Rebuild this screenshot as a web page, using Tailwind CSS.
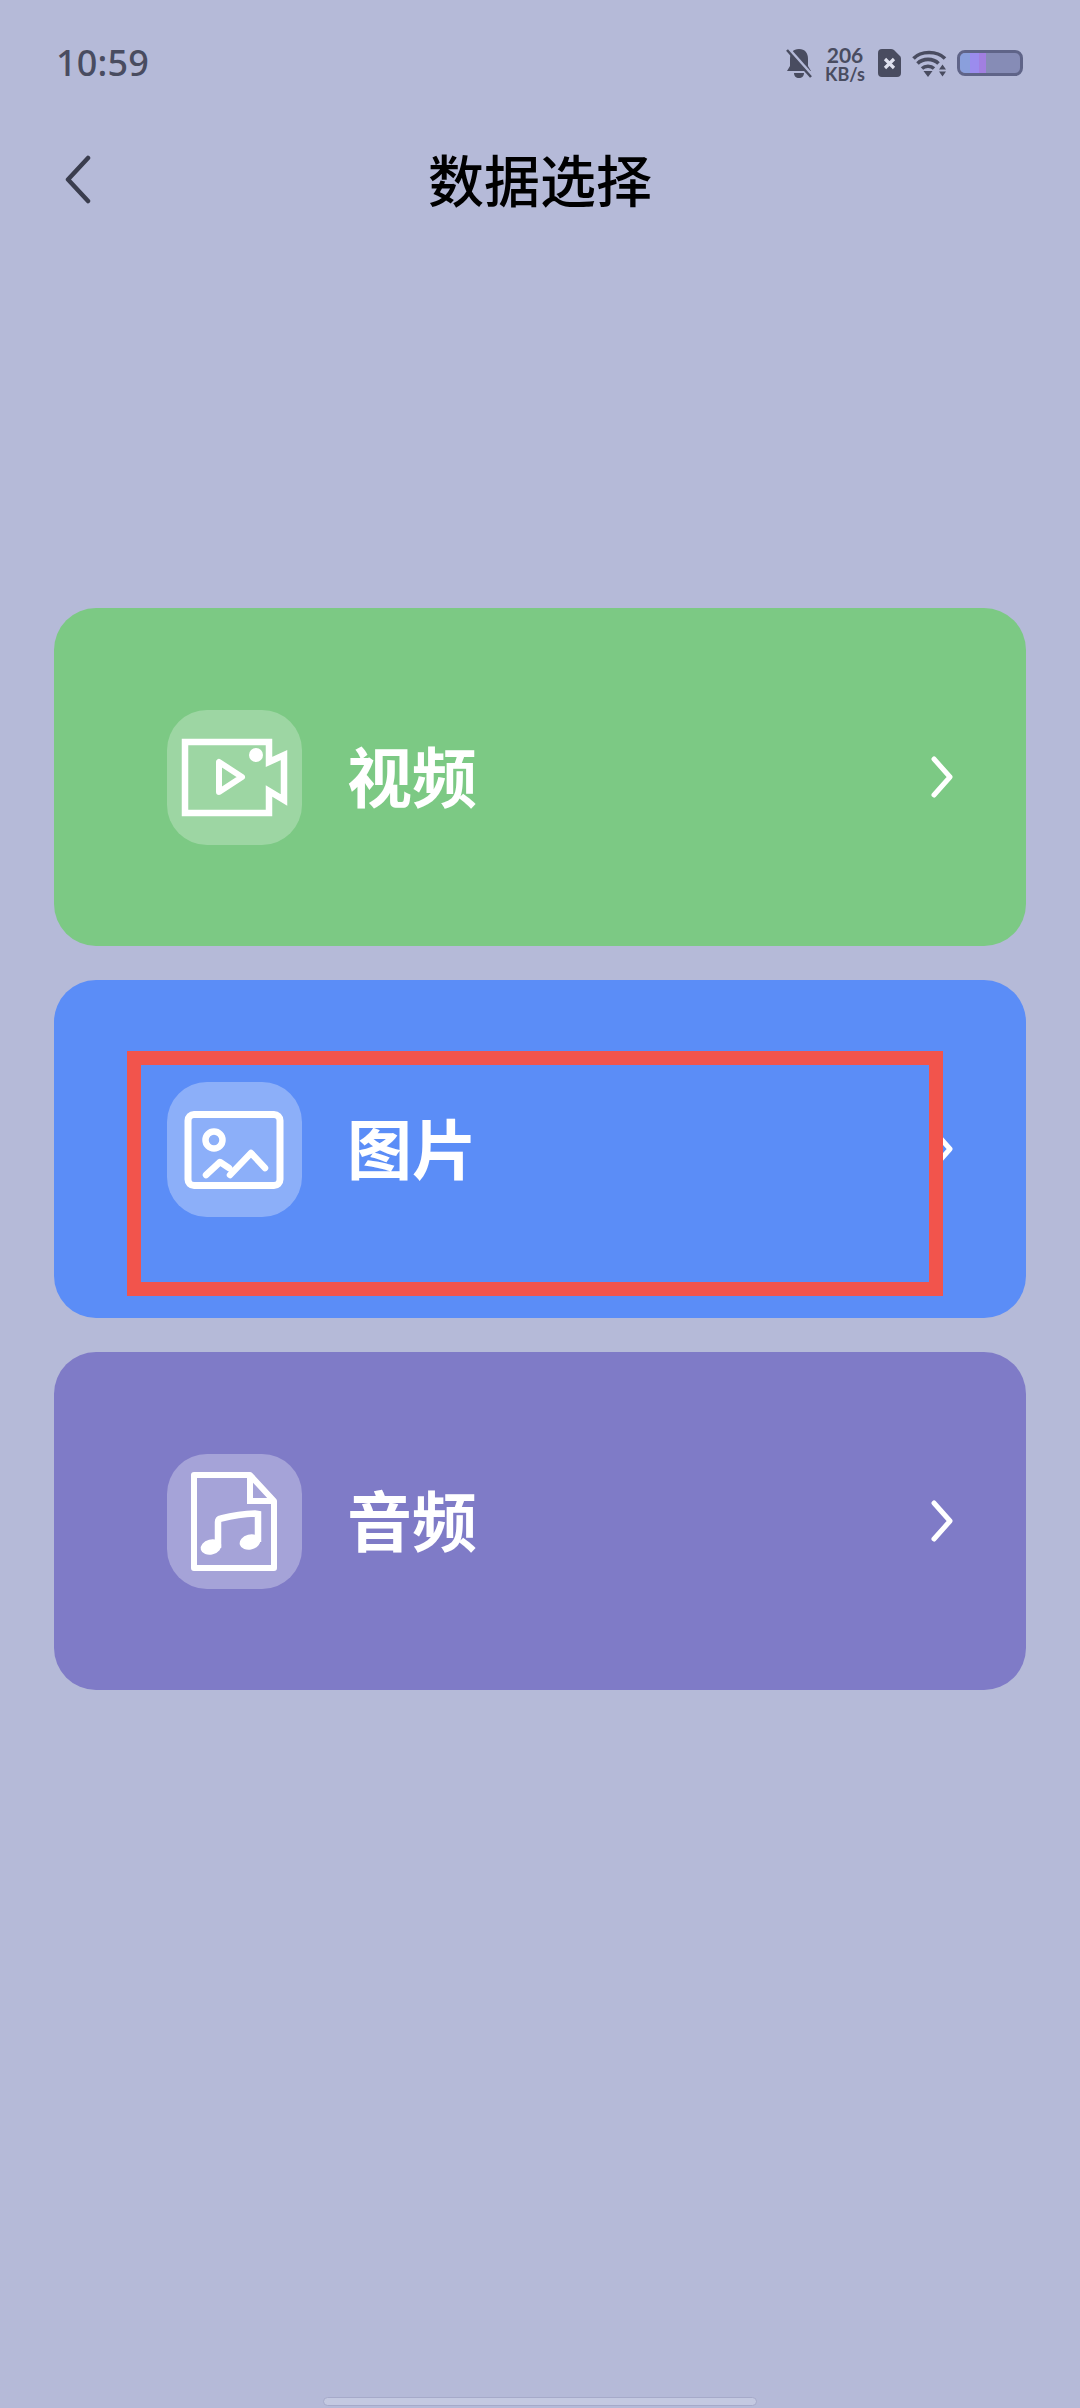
<!doctype html>
<html lang="zh">
<head>
<meta charset="utf-8">
<script src="https://cdn.jsdelivr.net/npm/@tailwindcss/browser@4"></script>
<title>数据选择</title>
</head>
<body class="m-0">
<div class="relative w-[1080px] h-[2408px] overflow-hidden bg-[#b5bad8] flex flex-col font-['Noto_Sans','Noto_Sans_CJK_SC',sans-serif]">
  <!-- status bar -->
  <div class="h-[128px] pt-[32px] pb-[34px] pl-[56px] pr-[57px] flex items-center justify-between text-[#494c60]">
    <span class="text-[36px] leading-none font-medium tracking-[0.2px]">10:59</span>
    <div class="flex items-center">
      <svg class="w-[26px] h-[30px]" viewBox="0 0 26 30">
        <path d="M13 1c6 0 9 4 9 10v7l3 5H1l3-5v-7c0-6 3-10 9-10zM8 25h10c0 3-2 5-5 5s-5-2-5-5z" fill="#494c60"/>
        <path d="M2 0 26 27" stroke="#b5bad8" stroke-width="3"/>
        <path d="M1 2 25 29" stroke="#494c60" stroke-width="2.500"/>
      </svg>
      <div class="ml-[13px] w-[40px] flex flex-col items-center font-bold font-['Lato',sans-serif]">
        <span class="text-[21px] leading-[21px]">206</span>
        <span class="text-[18px] leading-[18px]">KB/s</span>
      </div>
      <svg class="ml-[13px] w-[23px] h-[28px]" viewBox="0 0 23 28">
        <path d="M4 0h9c1 0 2 .5 3 1l6 6c.7.7 1 1.500 1 3v14a4 4 0 0 1-4 4H4a4 4 0 0 1-4-4V4a4 4 0 0 1 4-4z" fill="#494c60"/>
        <path d="M7 10 16 19M16 10 7 19" stroke="#dfe1ee" stroke-width="3.200"/>
      </svg>
      <svg class="ml-[11px] w-[35px] h-[27px]" viewBox="0 0 35 27">
        <path d="M1.500 8.500C9 .5 25 .5 33 8.500" fill="none" stroke="#494c60" stroke-width="3.600"/>
        <path d="M5.500 13.500C11 8 21 8 26.500 13.500" fill="none" stroke="#494c60" stroke-width="3.600"/>
        <path d="M10 18.500C13 15.500 19 15.500 22 18.500" fill="none" stroke="#494c60" stroke-width="3.400"/>
        <path d="M11.500 21h9l-4.500 6zM27 19.500l3.500-5 3.500 5zM27 21.500h7l-3.500 5z" fill="#494c60"/>
      </svg>
      <div class="ml-[10px] w-[66px] h-[26px] rounded-[8px] border-[3px] border-[#5f6488] bg-[#868cb6] overflow-hidden flex">
        <div class="w-[10px] bg-[#8a9fdc]"></div>
        <div class="w-[9px] bg-[#9b8cee]"></div>
        <div class="w-[7px] bg-[#a17fe0]"></div>
      </div>
    </div>
  </div>

  <!-- title bar -->
  <div class="relative h-[104px] flex items-center justify-center">
    <svg class="absolute left-[63px] top-[27px] w-[30px] h-[50px]" viewBox="0 0 30 50">
      <path d="M25 3 5 24.500 25 46" fill="none" stroke="#3a3d4e" stroke-width="4.500" stroke-linecap="round" stroke-linejoin="round"/>
    </svg>
    <h1 class="text-[56px] leading-none font-medium text-black">数据选择</h1>
  </div>

  <!-- cards -->
  <div class="mt-[376px] px-[54px] flex flex-col gap-[34px]">
    <div class="h-[338px] rounded-[42px] bg-[#7cc984] pl-[113px] pr-[73px] flex items-center">
      <div class="w-[135px] h-[135px] rounded-[40px] bg-white/25 shrink-0">
        <svg class="w-[135px] h-[135px]" viewBox="0 0 135 135">
          <path d="M18 32H102V52L117 45V90L102 81V103H18Z" fill="none" stroke="#fff" stroke-width="6.500"/>
          <circle cx="89" cy="45" r="7" fill="#fff"/>
          <path d="M52 52V82L75 67Z" fill="none" stroke="#fff" stroke-width="6" stroke-linejoin="round"/>
        </svg>
      </div>
      <span class="ml-[45px] text-[65px] leading-none font-bold text-white">视频</span>
      <svg class="ml-auto w-[22px] h-[42px]" viewBox="0 0 22 42">
        <path d="M3 3 19 21 3 39" fill="none" stroke="#fff" stroke-width="5" stroke-linecap="round" stroke-linejoin="round"/>
      </svg>
    </div>

    <div class="h-[338px] rounded-[42px] bg-[#5b8df7] pl-[113px] pr-[73px] flex items-center">
      <div class="w-[135px] h-[135px] rounded-[40px] bg-white/30 shrink-0">
        <svg class="w-[135px] h-[135px]" viewBox="0 0 135 135">
          <rect x="21" y="32.500" width="92" height="71" rx="6" fill="none" stroke="#fff" stroke-width="7"/>
          <circle cx="47" cy="58" r="8.500" fill="none" stroke="#fff" stroke-width="6.500"/>
          <path d="M39 93 53 80 62 86M63 93 84 71 98 86" fill="none" stroke="#fff" stroke-width="6.500" stroke-linecap="round" stroke-linejoin="round"/>
        </svg>
      </div>
      <span class="ml-[45px] text-[65px] leading-none font-bold text-white">图片</span>
      <svg class="ml-auto w-[22px] h-[42px]" viewBox="0 0 22 42">
        <path d="M3 3 19 21 3 39" fill="none" stroke="#fff" stroke-width="5" stroke-linecap="round" stroke-linejoin="round"/>
      </svg>
    </div>

    <div class="h-[338px] rounded-[42px] bg-[#7f7bc7] pl-[113px] pr-[73px] flex items-center">
      <div class="w-[135px] h-[135px] rounded-[40px] bg-white/30 shrink-0">
        <svg class="w-[135px] h-[135px]" viewBox="0 0 135 135">
          <path d="M27 21H83L107 47V114H27Z" fill="none" stroke="#fff" stroke-width="6" stroke-linejoin="round"/>
          <path d="M83 21V47H107" fill="none" stroke="#fff" stroke-width="6"/>
          <path d="M51 94V68Q51 65 54 64.500Q72 60 88 59.500L91 60V88" fill="none" stroke="#fff" stroke-width="6.500"/>
          <ellipse cx="44" cy="93" rx="10.500" ry="7.500" transform="rotate(-15 44 93)" fill="#fff"/>
          <ellipse cx="83" cy="88" rx="10.500" ry="7.500" transform="rotate(-15 83 88)" fill="#fff"/>
        </svg>
      </div>
      <span class="ml-[45px] text-[65px] leading-none font-bold text-white">音频</span>
      <svg class="ml-auto w-[22px] h-[42px]" viewBox="0 0 22 42">
        <path d="M3 3 19 21 3 39" fill="none" stroke="#fff" stroke-width="5" stroke-linecap="round" stroke-linejoin="round"/>
      </svg>
    </div>
  </div>

  <!-- annotation rectangle over the second card -->
  <div class="absolute left-[127px] top-[1051px] w-[816px] h-[245px] border-[14px] border-[#f2544c]"></div>

  <!-- gesture bar -->
  <div class="mt-auto mb-[2px] mx-auto w-[434px] h-[9px] rounded-full bg-[#c4c9e1] border border-[#a6aaca]"></div>
</div>
</body>
</html>
